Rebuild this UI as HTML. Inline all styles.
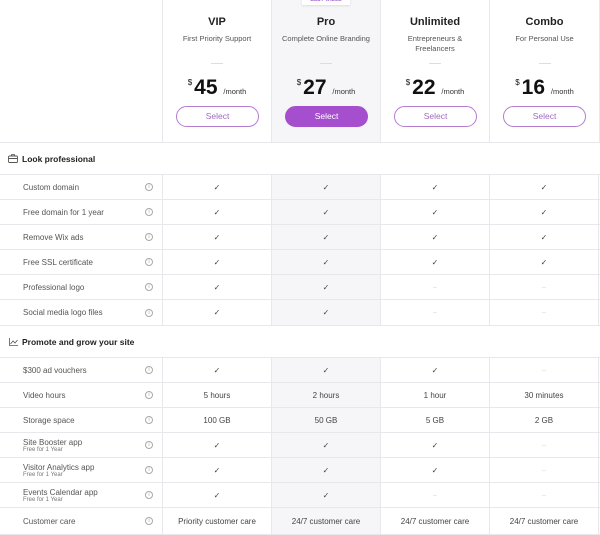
<!DOCTYPE html>
<html><head><meta charset="utf-8"><style>
*{box-sizing:border-box;margin:0;padding:0}
body{width:600px;height:535px;overflow:hidden;background:#fff;font-family:"Liberation Sans",sans-serif;color:#222;position:relative}
.r{position:absolute;left:0;width:600px;display:grid;grid-template-columns:163px 109px 109px 109px 109px 1px;border-bottom:1px solid #e8e8ec}
.r>div{border-right:1px solid #e8e8ec;display:flex;align-items:center;justify-content:center;font-size:8px;color:#444}
.r>div:nth-child(3){background:#f6f6f8}
.r>div.l{justify-content:flex-start;padding-left:23px;position:relative;flex-direction:column;align-items:flex-start;justify-content:center;color:#555}
.l .i{position:absolute;left:145px;top:50%;margin-top:-4px;width:8px;height:8px;border:1px solid #aaa;border-radius:50%;font-size:6px;line-height:6px;text-align:center;color:#aaa}
.l small{font-size:6px;color:#777}
.d{color:#d4d4d4 !important;font-size:7px !important}
.s{position:absolute;left:0;width:600px;border-bottom:1px solid #e8e8ec;font-weight:bold;font-size:8.5px;color:#222;display:flex;align-items:center;padding-left:22px}
.h{position:absolute;top:0;height:143px;text-align:center;border-right:1px solid #e8e8ec;border-bottom:1px solid #e8e8ec}
.h b{display:block;margin-top:16px;font-size:11px;color:#222}
.h p{font-size:7.5px;color:#555;margin-top:6px;line-height:10px}
.h .ln{position:absolute;top:63px;left:50%;margin-left:-6px;width:12px;border-top:1px solid #ddd}
.h .pr{position:absolute;top:76px;left:0;width:100%;font-size:21px;font-weight:bold;color:#111}
.h .pr sup{font-size:8px;font-weight:normal;vertical-align:9px;margin-right:2px}
.h .pr span{font-size:7.5px;font-weight:normal;color:#333}
.h .bt{position:absolute;top:106px;left:13px;width:83px;height:21px;border:1px solid #b57cd0;border-radius:11px;font-size:8.5px;color:#a26ac0;line-height:19px}
</style></head><body>
<div class="h" style="left:0;width:163px"></div>
<div class="h" style="left:163px;width:109px"><b>VIP</b><p>First Priority Support</p><div class="ln"></div><div class="pr"><sup>$</sup>45 <span>/month</span></div><div class="bt">Select</div></div>
<div class="h" style="left:272px;width:109px;background:#f6f6f8"><div style="position:absolute;top:-4px;left:30px;width:48px;height:9px;background:#fff;font-size:5px;color:#a35ccf;font-weight:bold;line-height:9px;box-shadow:0 1px 2px #ddd">BEST VALUE</div><b>Pro</b><p>Complete Online Branding</p><div class="ln"></div><div class="pr"><sup>$</sup>27 <span>/month</span></div><div class="bt" style="background:#a64fce;border-color:#a64fce;color:#fff">Select</div></div>
<div class="h" style="left:381px;width:109px"><b>Unlimited</b><p>Entrepreneurs &amp;<br>Freelancers</p><div class="ln"></div><div class="pr"><sup>$</sup>22 <span>/month</span></div><div class="bt">Select</div></div>
<div class="h" style="left:490px;width:110px"><b>Combo</b><p>For Personal Use</p><div class="ln"></div><div class="pr"><sup>$</sup>16 <span>/month</span></div><div class="bt">Select</div></div>

<div class="s" style="top:143px;height:32px"><svg style="position:absolute;left:8px;top:11px" width="10" height="9" viewBox="0 0 10 9"><rect x="0.5" y="2" width="9" height="6.5" rx="1" fill="none" stroke="#555" stroke-width="0.9"/><path d="M3.5 2V0.7h3V2M0.5 4.5h9" fill="none" stroke="#555" stroke-width="0.9"/></svg>Look professional</div>
<div class="r" style="top:175px;height:25px"><div class="l">Custom domain<span class="i">i</span></div><div>✓</div><div>✓</div><div>✓</div><div>✓</div></div>
<div class="r" style="top:200px;height:25px"><div class="l">Free domain for 1 year<span class="i">i</span></div><div>✓</div><div>✓</div><div>✓</div><div>✓</div></div>
<div class="r" style="top:225px;height:25px"><div class="l">Remove Wix ads<span class="i">i</span></div><div>✓</div><div>✓</div><div>✓</div><div>✓</div></div>
<div class="r" style="top:250px;height:25px"><div class="l">Free SSL certificate<span class="i">i</span></div><div>✓</div><div>✓</div><div>✓</div><div>✓</div></div>
<div class="r" style="top:275px;height:25px"><div class="l">Professional logo<span class="i">i</span></div><div>✓</div><div>✓</div><div class="d">–</div><div class="d">–</div></div>
<div class="r" style="top:300px;height:26px"><div class="l">Social media logo files<span class="i">i</span></div><div>✓</div><div>✓</div><div class="d">–</div><div class="d">–</div></div>

<div class="s" style="top:326px;height:32px"><svg style="position:absolute;left:9px;top:12px" width="9" height="8" viewBox="0 0 9 8"><path d="M0.5 0v7.5H9M1.5 6l2.5-3 2 2 2.5-3" fill="none" stroke="#555" stroke-width="0.8"/></svg>Promote and grow your site</div>
<div class="r" style="top:358px;height:25px"><div class="l">$300 ad vouchers<span class="i">i</span></div><div>✓</div><div>✓</div><div>✓</div><div class="d">–</div></div>
<div class="r" style="top:383px;height:25px"><div class="l">Video hours<span class="i">i</span></div><div>5 hours</div><div>2 hours</div><div>1 hour</div><div>30 minutes</div></div>
<div class="r" style="top:408px;height:25px"><div class="l">Storage space<span class="i">i</span></div><div>100 GB</div><div>50 GB</div><div>5 GB</div><div>2 GB</div></div>
<div class="r" style="top:433px;height:25px"><div class="l">Site Booster app<small>Free for 1 Year</small><span class="i">i</span></div><div>✓</div><div>✓</div><div>✓</div><div class="d">–</div></div>
<div class="r" style="top:458px;height:25px"><div class="l">Visitor Analytics app<small>Free for 1 Year</small><span class="i">i</span></div><div>✓</div><div>✓</div><div>✓</div><div class="d">–</div></div>
<div class="r" style="top:483px;height:25px"><div class="l">Events Calendar app<small>Free for 1 Year</small><span class="i">i</span></div><div>✓</div><div>✓</div><div class="d">–</div><div class="d">–</div></div>
<div class="r" style="top:508px;height:27px"><div class="l">Customer care<span class="i">i</span></div><div>Priority customer care</div><div>24/7 customer care</div><div>24/7 customer care</div><div>24/7 customer care</div></div>
</body></html>
